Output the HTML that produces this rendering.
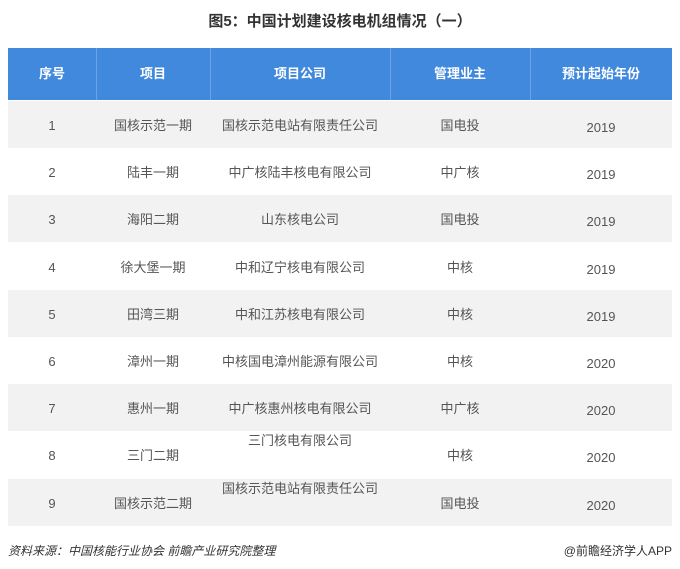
<!DOCTYPE html>
<html><head><meta charset="utf-8"><style>
body{margin:0;width:680px;height:569px;background:#fff;font-family:"Liberation Sans","Noto Sans CJK SC",sans-serif;position:relative;overflow:hidden}
.t{position:absolute;top:10px;left:0;width:680px;text-align:center;font-weight:bold;font-size:15px;color:#333}
.hd{position:absolute;left:8px;top:48px;width:664px;height:52px;background:#4189dd}
.c{position:absolute;text-align:center;font-size:13px;line-height:16px;color:#555;white-space:nowrap}
.h{color:#fff;font-weight:bold;font-size:13px}
.sep{position:absolute;top:48px;height:52px;width:1px;background:#6aa3e5}
.r{position:absolute;left:8px;width:664px;height:47px}
.g{background:#f2f2f2}
.f{position:absolute;top:542px;font-size:12px;color:#333}
</style></head><body>
<div class="t">图5：中国计划建设核电机组情况（一）</div>
<div class="hd"></div>
<div class="sep" style="left:96px"></div><div class="sep" style="left:210px"></div><div class="sep" style="left:390px"></div><div class="sep" style="left:530px"></div>
<div class="c h" style="left:8px;width:88px;top:66px">序号</div>
<div class="c h" style="left:96px;width:114px;top:66px">项目</div>
<div class="c h" style="left:210px;width:180px;top:66px">项目公司</div>
<div class="c h" style="left:390px;width:140px;top:66px">管理业主</div>
<div class="c h" style="left:530px;width:142px;top:66px">预计起始年份</div>
<div id="rows"></div>
<script>
var d=[["1","国核示范一期","国核示范电站有限责任公司","国电投","2019"],["2","陆丰一期","中广核陆丰核电有限公司","中广核","2019"],["3","海阳二期","山东核电公司","国电投","2019"],["4","徐大堡一期","中和辽宁核电有限公司","中核","2019"],["5","田湾三期","中和江苏核电有限公司","中核","2019"],["6","漳州一期","中核国电漳州能源有限公司","中核","2020"],["7","惠州一期","中广核惠州核电有限公司","中广核","2020"],["8","三门二期","三门核电有限公司","中核","2020"],["9","国核示范二期","国核示范电站有限责任公司","国电投","2020"]];
var L=[[8,88],[96,114],[210,180],[390,140],[530,142]],h="";
d.forEach(function(r,i){var y=101+i*47.2;h+='<div class="r'+(i%2==0?' g':'')+'" style="top:'+y+'px"></div>';
r.forEach(function(t,j){var ty=y+17;if(j==4)ty=y+19;if(i>=7&&j==2)ty=y+2;
h+='<div class="c" style="left:'+L[j][0]+'px;width:'+L[j][1]+'px;top:'+ty+'px">'+t+'</div>';});});
document.getElementById('rows').innerHTML=h;
</script>
<div class="f" style="left:8px;font-style:italic">资料来源：中国核能行业协会 前瞻产业研究院整理</div>
<div class="f" style="right:8px">@前瞻经济学人APP</div>
</body></html>
